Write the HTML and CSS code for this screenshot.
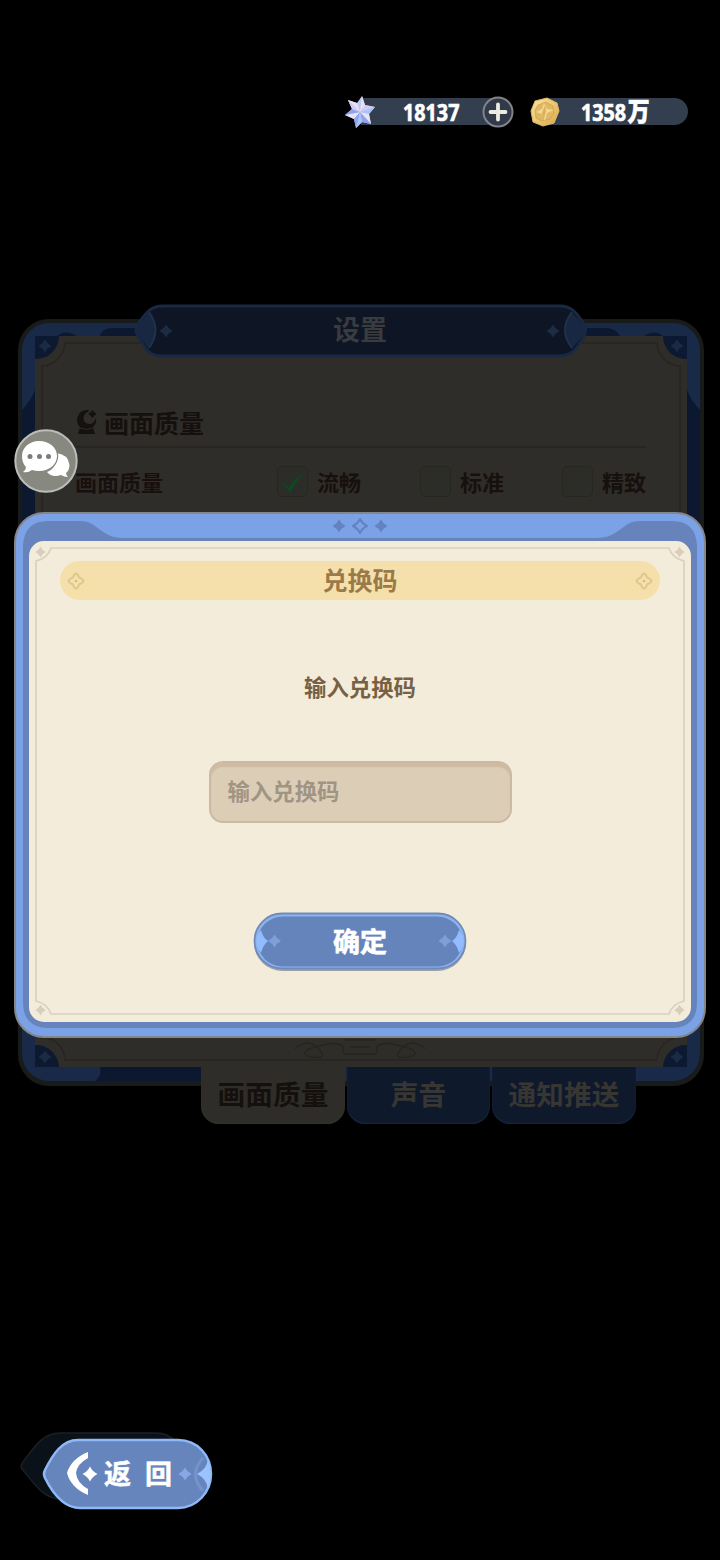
FILE: index.html
```html
<!DOCTYPE html>
<html lang="zh-CN">
<head>
<meta charset="utf-8">
<title>兑换码</title>
<link rel="stylesheet" href="styles.css">
</head>
<body>
<svg class="defs" width="0" height="0">
  <defs>
    <path id="spark" d="M0-6.500Q2-2.200 6.500 0Q2 2.200 0 6.500Q-2 2.200-6.500 0Q-2-2.200 0-6.500Z"/>
    <linearGradient id="gold" x1="0" y1="0" x2="1" y2="1"><stop offset="0" stop-color="#fbe7a1"/><stop offset="1" stop-color="#dca648"/></linearGradient>
  </defs>
</svg>
<div class="screen">
  <header class="wallet">
    <div class="coin coin-star">
      <svg class="gem" width="34" height="34" viewBox="0 0 34 34">
        <path fill="#bfc8f5" d="M19 1L22 10L32 12L26 19L28 29L19 27L13 33L11 24L2 20L9 14L5 5L14 8Z"/>
        <path fill="#e9e2f4" d="M19 1L22 10L17 17ZM5 5L14 8L17 17ZM2 20L11 24L17 17ZM28 29L26 19L17 17Z"/>
        <path fill="#8ea2ee" d="M2 20L9 14L17 17ZM13 33L11 24L17 17L16 25ZM19 27L28 29L17 17Z"/>
        <path fill="#d2cdf0" d="M32 12L22 10L17 17ZM5 5L9 14L17 17Z"/>
        <path fill="#a9c4fb" d="M13 33L19 27L17 17ZM32 12L26 19L17 17Z"/>
      </svg>
      <span class="amount">18137</span>
      <svg class="plus" width="32" height="32" viewBox="0 0 32 32">
        <circle cx="16" cy="16" r="14.500" fill="#303a48" stroke="#85838a" stroke-width="2"/>
        <path d="M16 8.500V23.500M8.500 16H23.500" stroke="#edeae2" stroke-width="3.800" stroke-linecap="round"/>
      </svg>
    </div>
    <div class="coin coin-gold">
      <svg class="gem" width="30" height="30" viewBox="0 0 30 30">
        <path fill="url(#gold)" stroke="#e3bb65" stroke-width="1" stroke-linejoin="round" d="M5 4L17 1L27 6L29 14L24 26L13 29L3 25L1 14Z"/>
        <path fill="#e0b863" stroke="#c89a4a" stroke-width=".6" d="M8 8L16 5L23 9L24 16L20 22L12 24L6 21L5 13Z"/>
        <path fill="#f6d98a" d="M14 6L17 12L24 13L17 16L15 24L12 17L6 15L12 12Z"/>
        <path fill="#b98839" d="M15 8L16 14L14 22L12 16Z" opacity=".5"/>
      </svg>
      <span class="amount">1358<b class="wan">万</b></span>
    </div>
  </header>

  <section class="settings">
    <svg class="frame" width="720" height="830" viewBox="0 304 720 830">
      <rect x="18" y="319" width="686" height="767" rx="31" fill="#191a1a"/>
      <rect x="22" y="323" width="678" height="758" rx="27" fill="#182a47"/>
      <path fill="#0c1830" d="M22 410Q30 402 35 390V1035Q30 1015 22 1010ZM700 410Q692 402 687 390V1035Q692 1015 700 1010ZM100 336Q102 328 112 328H170V337H100ZM552 328H608Q618 330 620 337H552ZM56 337Q66 328 78 337ZM643 337Q655 328 664 337ZM100 1067H202V1081H95Q102 1076 100 1067Z"/>
      <path fill="#2f2d29" d="M35 336H687V1067H35Z"/>
      <path fill="none" stroke="#28251f" stroke-width="1.500" d="M65 343H657A24 24 0 0 0 680 366V1037A24 24 0 0 0 657 1060H65A24 24 0 0 0 42 1037V366A24 24 0 0 0 65 343Z"/>
      <g fill="#0d1930">
        <path d="M35 336H59A23 23 0 0 1 35 359Z"/><path d="M687 336H663A23 23 0 0 0 687 359Z"/>
        <path d="M35 1067H59A23 23 0 0 0 35 1045Z"/><path d="M687 1067H663A23 23 0 0 1 687 1045Z"/>
      </g>
      <g fill="#1b2b45"><use href="#spark" x="45" y="346"/><use href="#spark" x="677" y="346"/><use href="#spark" x="45" y="1057"/><use href="#spark" x="677" y="1057"/></g>
      <path fill="#0e1524" stroke="#192943" stroke-width="3" d="M163 306H560C574 306 578 316 584 324Q587 329 584 336C578 346 574 356 559 356H161C148 356 144 346 138 336Q134 330 138 324C145 315 149 306 163 306Z"/>
      <path fill="#182842" d="M149 312Q163 330 149 349L137 333V327ZM572 312Q557 330 572 349L585 333V327Z"/>
      <path fill="none" stroke="#21314b" stroke-width="2" d="M149 312Q162 330 149 348M572 312Q558 330 572 348"/>
      <g fill="#1e2c43"><use href="#spark" x="166" y="331"/><use href="#spark" x="553" y="331"/></g>
      <path stroke="#28251f" stroke-width="1.500" d="M76 447H646"/>
      <g fill="none" stroke="#27251f" stroke-width="1.500"><path d="M295 1049q13-12 24 0t-12 7q-8-6 16-11t20 8M425 1049q-13-12-24 0t12 7q8-6-16-11t-20 8M345 1040h30M350 1047h20M344 1054h32"/></g>
    </svg>
    <h2 class="settings-title">设置</h2>
    <div class="settings-body">
      <h3 class="group">
        <svg width="24" height="26" viewBox="0 0 24 26"><path fill="#14110e" d="M12 1A10 10 0 0 0 5 18L4 22L3 25H20L19 22L18 18A10 10 0 0 0 21 9Q19 15 14 15Q8 14 8.500 8Q10 3 15 2Z"/><path stroke="#2f2d29" stroke-width="1" fill="none" d="M5 19Q12 22 18 19"/><use href="#spark" fill="#14110e" transform="translate(17.500 5) scale(.65)"/></svg>
        <span>画面质量</span>
      </h3>
      <div class="options">
        <span class="name">画面质量</span>
        <span class="option"><i class="box"><svg width="32" height="32" viewBox="0 0 32 32"><path fill="#0b4a20" d="M4 16Q9 18 12 22Q18 11 27 7Q19 15 13 27Q9 20 4 16Z"/></svg></i>流畅</span>
        <span class="option"><i class="box"></i>标准</span>
        <span class="option"><i class="box"></i>精致</span>
      </div>
    </div>
    <nav class="tabs"><span class="tab active">画面质量</span><span class="tab">声音</span><span class="tab">通知推送</span></nav>
  </section>

  <footer class="bottom">
    <div class="back">
      <svg class="frame" width="194" height="82" viewBox="20 1430 194 82">
        <path fill="#0b1119" stroke="#1b2027" stroke-width="1.500" d="M60 1433H156Q180 1433 190 1470Q180 1499 156 1499H61C43 1499 34 1483 22 1469Q20 1466 23 1462C34 1448 42 1433 60 1433Z"/>
        <path fill="#6785bd" stroke="#8eb9f8" stroke-width="2.500" d="M78 1440H178C198 1440 211 1456 211 1474S197 1508 178 1508H80C64 1508 53 1494 45 1478Q43 1474 45 1470C53 1454 62 1440 78 1440Z"/>
        <path fill="none" stroke="#7593cb" stroke-width="3" d="M203 1458Q188 1474 203 1491"/>
        <path fill="#9bc4ff" d="M208 1459Q207 1469 197 1474Q207 1479 208 1489Q213 1474 208 1459Z"/>
        <path fill="#fff" d="M88 1452Q71 1459 67 1473Q71 1488 88 1495V1489Q77 1483 76 1473Q77 1464 88 1458Z"/>
        <use href="#spark" transform="translate(90 1474) scale(1.150)" fill="#fff"/>
        <use href="#spark" x="185" y="1474" fill="#86a9e5"/>
      </svg>
      <span class="back-label">返<span>回</span></span>
    </div>
  </footer>

  <section class="dialog">
    <svg class="frame" width="692" height="526" viewBox="14 512 692 526">
      <rect x="15" y="513" width="690" height="524" rx="29" fill="#7ba1e7" stroke="#83868b" stroke-width="2"/>
      <path fill="#6684bb" d="M23 546Q24 521 48 521H80C99 521 99 538 124 538H596C621 538 621 521 640 521H672Q696 521 697 546V1002Q697 1028 671 1028H49Q23 1028 23 1002Z"/>
      <rect x="29" y="541" width="662" height="481" rx="15" fill="#f4ecdb"/>
      <path fill="none" stroke="#dacfc0" stroke-width="1.700" d="M51 548H669Q672 558 684 561V1001Q672 1004 669 1014H51Q48 1004 36 1001V561Q48 558 51 548Z"/>
      <g fill="#d9cdbd"><use href="#spark" transform="translate(40.500 552) scale(.8)"/><use href="#spark" transform="translate(679.500 552) scale(.8)"/><use href="#spark" transform="translate(40.500 1010) scale(.8)"/><use href="#spark" transform="translate(679.500 1010) scale(.8)"/></g>
      <path fill="#7ba1e7" d="M124 520H596V538H124Z"/>
      <g fill="#6283bf"><use href="#spark" x="339" y="526"/><use href="#spark" x="381" y="526"/></g>
      <path fill="none" stroke="#6283bf" stroke-width="2" stroke-linejoin="round" d="M360 519Q362 523.500 367 526Q362 528.500 360 533Q358 528.500 353 526Q358 523.500 360 519Z"/>
    </svg>
    <h1 class="dialog-title">
      <svg width="18" height="18" viewBox="0 0 18 18"><path fill="none" stroke="#dfc88e" stroke-width="2" stroke-linejoin="round" d="M9 1.500Q11 2 12 5.500Q16 7 16.500 9Q16 11 12 12.500Q11 16 9 16.500Q7 16 6 12.500Q2 11 1.500 9Q2 7 6 5.500Q7 2 9 1.500Z"/><circle cx="9" cy="9" r="1.300" fill="#d7bb7a"/></svg>
      <span>兑换码</span>
      <svg width="18" height="18" viewBox="0 0 18 18"><path fill="none" stroke="#dfc88e" stroke-width="2" stroke-linejoin="round" d="M9 1.500Q11 2 12 5.500Q16 7 16.500 9Q16 11 12 12.500Q11 16 9 16.500Q7 16 6 12.500Q2 11 1.500 9Q2 7 6 5.500Q7 2 9 1.500Z"/><circle cx="9" cy="9" r="1.300" fill="#d7bb7a"/></svg>
    </h1>
    <p class="prompt">输入兑换码</p>
    <div class="code-input">输入兑换码</div>
    <div class="confirm">
      <svg class="frame" width="214" height="60" viewBox="0 0 214 60">
        <rect x="1" y="2" width="212" height="57" rx="28.500" fill="#9ba2ad"/>
        <rect x="1.500" y="1.500" width="211" height="55" rx="27.500" fill="#8bb4f4" stroke="#718bb6" stroke-width="1.800"/>
        <rect x="4.500" y="4.500" width="205" height="50" rx="25" fill="#6584bb"/>
        <path fill="#92bcff" d="M8 18Q10 26 15 29Q10 33 8 41Q-1 29 8 18ZM206 18Q204 26 199 29Q204 33 206 41Q215 29 206 18Z"/>
        <use href="#spark" x="21.500" y="29" fill="#7e9fda"/><use href="#spark" x="192" y="29" fill="#7e9fda"/>
      </svg>
      <span>确定</span>
    </div>
  </section>

  <svg class="chat" width="64" height="64" viewBox="0 0 64 64">
    <circle cx="32" cy="32" r="30.700" fill="#878980" stroke="#bcbcb8" stroke-width="2"/>
    <path fill="#fff" d="M42 24Q54 25 55.500 36Q55.500 41 52 44Q52 46 54 48Q50 48 47 46Q38 49 33 43Q44 39 42 24Z"/>
    <path fill="#fff" stroke="#878980" stroke-width="2.500" paint-order="stroke" d="M25 12C36 12 43 19 43 27S36 42 25 42Q21 42 18 41Q14 44 9 43Q12 41 12 38Q8 34 8 27C8 19 15 12 25 12Z"/>
    <g fill="#7b7d76"><circle cx="16" cy="27.500" r="2.500"/><circle cx="25.500" cy="27.500" r="2.500"/><circle cx="34.500" cy="27.500" r="2.500"/></g>
  </svg>
</div>
</body>
</html>
```
FILE: styles.css
```css
* { box-sizing: border-box; }
body { margin: 0; background: #000; font-family: "Noto Sans CJK SC", sans-serif; font-weight: 700; }
h1, h2, h3, p { margin: 0; font-weight: 700; }
svg { display: block; flex: none; }
.defs { position: absolute; }
.screen { position: relative; display: flex; flex-direction: column; width: 720px; height: 1560px; overflow: hidden; background: #000; }
.frame { position: absolute; top: 0; left: 0; }

.wallet { display: flex; flex: none; gap: 16px; height: 304px; padding: 95px 0 0 343px; }
.coin { display: flex; align-items: center; height: 34px; }
.coin-star { width: 172px; background: linear-gradient(#333e4f, #333e4f) 18px 3px / 136px 27px no-repeat; }
.coin-gold { width: 157px; height: 33px; }
.coin-gold::before { content: ""; flex: none; width: 142px; height: 27px; margin: 0 -157px 0 15px; border-radius: 0 14px 14px 0; background: #333e4f; }
.coin-gold .gem { z-index: 1; margin-left: -1px; }
.amount { z-index: 1; color: #fff; font: 700 23.500px/30px "Noto Sans", "Noto Sans CJK SC", sans-serif; white-space: nowrap; transform: scaleX(.84); transform-origin: left; -webkit-text-stroke: .7px #fff; }
.coin-star .amount { width: 80px; margin-left: 26px; }
.coin-gold .amount { margin-left: 21px; }
.plus { margin-left: -1px; }
.wan { font-family: "Noto Sans CJK SC", sans-serif; font-size: 26px; line-height: 20px; margin-left: 2px; }

.settings { position: relative; flex: none; height: 830px; }
.settings > :not(.frame) { position: relative; }
.settings-title { height: 53px; font-size: 27px; line-height: 49px; text-align: center; color: #393b3f; }
.settings-body { height: 710px; padding: 46px 60px 0 75px; color: #15100d; }
.group { display: flex; align-items: center; gap: 5px; height: 38px; font-size: 25px; line-height: 36px; }
.options { display: grid; grid-template-columns: 202px 143px 142px 1fr; align-items: center; height: 40px; margin-top: 20px; font-size: 22px; color: #17100e; }
.option { display: flex; align-items: center; gap: 9px; }
.box { width: 31px; height: 31px; border-radius: 5px; border: 1px solid #27271f; background: #2c2d28; }
.box svg { margin: -1px; }
.tabs { display: grid; grid-template-columns: 144px 143px 144px; gap: 2px; margin-left: 201px; }
.tab { height: 57px; border-radius: 0 0 18px 18px; font-size: 27.700px; line-height: 52px; text-align: center; white-space: nowrap; color: #383633; background: #0f192c; box-shadow: inset 0 -1px 2px #172944; }
.tab.active { color: #15100d; background: #2f2d29; box-shadow: inset 0 -1px 2px #38342c; }

.bottom { margin-top: auto; padding: 0 0 48px 20px; }
.back { position: relative; width: 194px; height: 82px; }
.back-label { position: relative; display: flex; gap: 14px; padding-left: 84px; font-size: 27px; line-height: 86px; color: #fff; -webkit-text-stroke: .5px #fff; }

.dialog { position: absolute; top: 512px; left: 14px; display: flex; flex-direction: column; align-items: center; width: 692px; height: 526px; padding-top: 49px; }
.dialog > :not(.frame) { position: relative; }
.dialog-title { display: flex; align-items: center; justify-content: space-between; width: 600px; height: 39px; padding: 0 7px; border-radius: 20px; font-size: 25px; line-height: 34px; color: #9a7a49; background: #f5e0ab; }
.dialog-title span { padding-bottom: 4px; }
.prompt { margin-top: 68px; font-size: 22.400px; line-height: 36px; color: #776144; }
.code-input { width: 303px; height: 62px; margin-top: 57px; padding-left: 17px; border: 2px solid #ccb9a2; border-radius: 14px; font-size: 22.400px; line-height: 55px; color: #a09484; background: #dccdb7; box-shadow: inset 0 4px 1px #cebba3; }
.confirm { width: 214px; height: 60px; margin-top: 89px; font-size: 27px; line-height: 57px; text-align: center; color: #fff; -webkit-text-stroke: .6px #fff; }
.confirm span { position: relative; }

.chat { position: absolute; top: 429px; left: 14px; }
```
